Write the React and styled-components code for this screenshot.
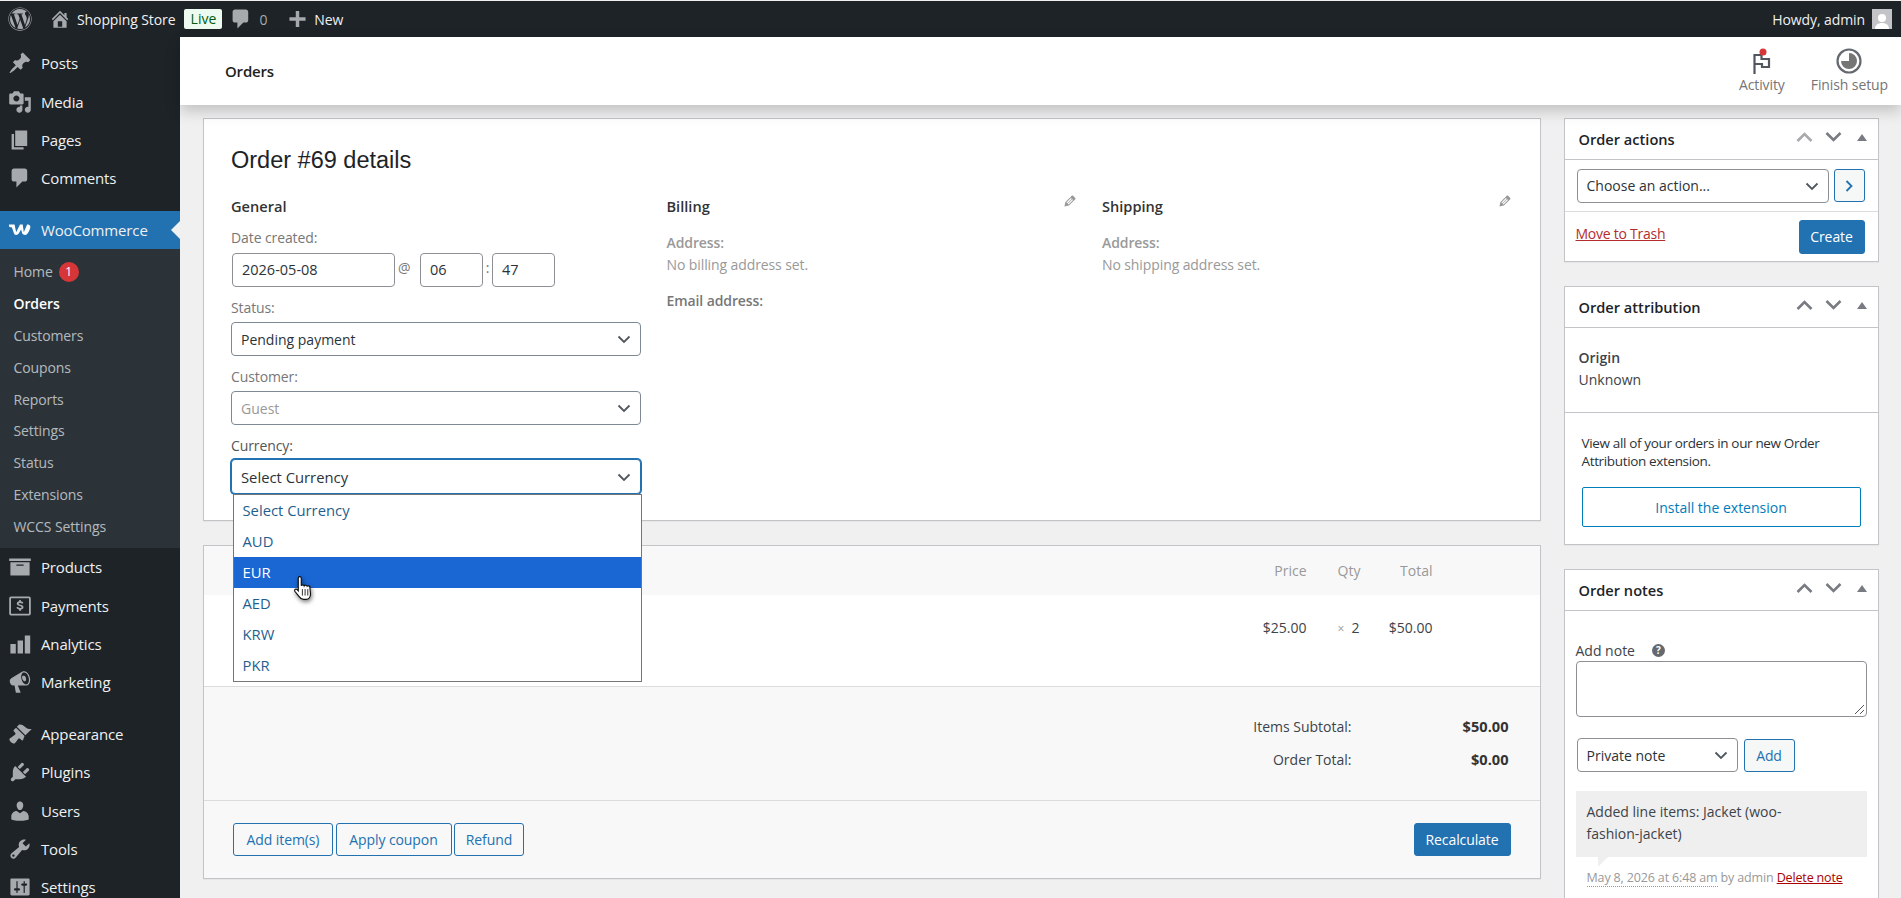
import React from "react";
import styled, { createGlobalStyle } from "styled-components";
import { FaWordpress } from "react-icons/fa";

const paths = {
  home: "M16 8.500l1.530 1.530-1.060 1.060L10 4.620l-6.470 6.470-1.060-1.060L10 2.500l4 4v-2h2v4zm-6-2.460l6 5.990V18H4v-5.970zM12 17v-5H8v5h4z",
  comment: "M5 2h9c1.100 0 2 .9 2 2v7c0 1.100-.9 2-2 2h-2l-5 5v-5H5c-1.100 0-2-.9-2-2V4c0-1.100.9-2 2-2z",
  plus: "M17 8v3h-5.500v5.500h-3V11H3V8h5.500V2.500h3V8z",
  post: "M10.440 3.020l1.820-1.820 6.360 6.350-1.830 1.820c-1.050-.68-2.480-.57-3.410.36l-.75.75c-.92.93-1.040 2.350-.35 3.410l-1.830 1.820-2.410-2.410-2.800 2.790c-.42.42-3.380 2.710-3.800 2.290s1.860-3.390 2.280-3.810l2.790-2.790L4.100 9.360l1.830-1.820c1.050.69 2.480.57 3.400-.36l.75-.75c.93-.92 1.050-2.350.36-3.410z",
  media: "M13 11V4c0-.55-.45-1-1-1h-1.670L9 1H5L3.670 3H2c-.55 0-1 .45-1 1v7c0 .55.45 1 1 1h10c.55 0 1-.45 1-1zM7 4.500c1.380 0 2.500 1.120 2.500 2.500S8.380 9.500 7 9.500 4.500 8.380 4.500 7 5.620 4.500 7 4.500zM14 6h5v10.500c0 1.380-1.120 2.500-2.500 2.500S14 17.880 14 16.500s1.120-2.500 2.500-2.500c.17 0 .34.02.5.05V9h-3V6zm-4 8.050V13h2v3.500c0 1.380-1.120 2.500-2.500 2.500S7 17.880 7 16.500 8.120 14 9.500 14c.17 0 .34.02.5.05z",
  page: "M6 15V2h10v13H6zm-1 1h8v2H3V5h2v11z",
  archive: "M19 3v2H1V3h18zM2 6h16v11H2V6zm11 3V8H7v1h6z",
  payments: "M2.500 2h15A1.500 1.500 0 0 1 19 3.500v13a1.500 1.500 0 0 1-1.500 1.500h-15A1.500 1.500 0 0 1 1 16.500v-13A1.500 1.500 0 0 1 2.500 2zm0 1.500v13h15v-13h-15zM9.300 5h1.400v1.100c1 .1 1.800.6 2.100 1.300l-1.200.7c-.2-.4-.7-.7-1.500-.7-.7 0-1.200.3-1.200.7s.4.600 1.500.8c1.500.3 2.500.8 2.500 2.100 0 1.100-.9 1.800-2 1.900V14H9.300v-1.100c-1.100-.1-2-.7-2.300-1.600l1.200-.6c.3.6.9 1 1.800 1 .8 0 1.300-.3 1.300-.8s-.4-.7-1.600-.9C8.200 9.700 7.300 9.200 7.300 8c0-1 .8-1.700 2-1.900V5z",
  analytics: "M2 10h4.500v8H2zM8 7h4.500v11H8zM14 3h4.500v15H14z",
  marketing: "M18.150 5.940c.46 1.620.38 3.220-.02 4.480-.42 1.280-1.260 2.180-2.300 2.480-.16.06-.26.06-.4.06-.06.02-.12.02-.18.02-.06.02-.14.02-.22.02h-6.800l2.220 5.500c.02.14-.06.26-.14.34-.08.1-.24.16-.34.16H6.950c-.1 0-.26-.06-.34-.16-.08-.08-.16-.2-.14-.34l-1-5.500H4.250l-.02-.02c-.5.06-1.080-.18-1.540-.62s-.88-1.080-1.060-1.880c-.24-.8-.2-1.560-.02-2.200.18-.62.58-1.080 1.060-1.300l.02-.02 9-5.400c.1-.06.18-.1.24-.16.06-.04.14-.08.24-.12.16-.08.28-.12.5-.18 1.040-.3 2.240.1 3.220 1 .98.88 1.800 2.240 2.260 3.860zm-2.580 5.980h-.02c.4-.1.74-.34 1.040-.7.58-.7.86-1.760.86-3.040-.02-.64-.1-1.300-.28-1.980-.34-1.360-1.020-2.500-1.780-3.240s-1.680-1.100-2.460-.88c-.82.22-1.400.96-1.700 2-.32 1.040-.28 2.360.06 3.720.38 1.360 1 2.500 1.800 3.240.78.74 1.620 1.100 2.480.88zm-2.540-7.080c.22-.04.42-.02.62.04.38.16.76.48 1.020 1s.42 1.200.42 1.780c0 .3-.04.56-.12.8-.18.48-.44.84-.86.94-.34.1-.8-.06-1.140-.4-.44-.4-.78-.96-1.020-1.580-.24-.64-.3-1.300-.16-1.760.12-.42.34-.72.7-.82z",
  appearance: "M14.480 11.060L7.410 3.990l1.500-1.500c.5-.56 2.300-.47 3.510.32 1.210.8 1.430 1.280 2.910 2.100 1.180.64 2.450 1.260 4.450.85zm-.71.71L6.700 4.700 4.930 6.470c-.39.39-.39 1.020 0 1.410l1.060 1.060c.39.39.39 1.030 0 1.420-.6.6-1.430 1.110-2.210 1.690-.35.26-.7.53-1.010.84C1.430 13.260 1 14.090 1.250 15c.25.91 1.600 2.310 2.750 2.750 1.150.44 1.740-.18 2.110-.55.31-.31.58-.66.84-1.010.58-.78 1.090-1.610 1.690-2.210.39-.39 1.020-.39 1.410 0l1.060 1.060c.39.39 1.020.39 1.410 0z",
  plugins: "M13.110 4.360L9.870 7.600 8 5.730l3.240-3.240c.35-.34 1.050-.2 1.560.32.52.51.66 1.210.31 1.550zm-8 1.770l.91-1.120 9.010 9.010-1.190.84c-.71.71-2.630 1.160-3.820 1.160H6.140L4.900 17.260c-.59.59-1.540.59-2.120 0-.59-.58-.59-1.530 0-2.120l1.240-1.240v-3.880c0-1.130.4-3.190 1.090-3.890zm7.260 3.970l3.240-3.240c.34-.35 1.040-.21 1.550.31.52.51.66 1.210.31 1.550l-3.240 3.250z",
  users: "M10 9.250c-2.270 0-2.730-3.440-2.730-3.440C7 4.020 7.820 2 9.970 2c2.160 0 2.980 2.020 2.710 3.810 0 0-.41 3.440-2.680 3.440zm0 2.570L12.720 10c2.390 0 4.520 2.330 4.520 4.530v2.490s-3.650 1.130-7.240 1.130c-3.650 0-7.240-1.130-7.240-1.130v-2.490c0-2.250 1.940-4.480 4.470-4.480z",
  tools: "M16.680 9.770c-1.340 1.340-3.300 1.670-4.950.99l-5.410 6.520c-.99.99-2.590.99-3.580 0s-.99-2.590 0-3.570l6.520-5.420c-.68-1.650-.35-3.610.99-4.950 1.280-1.280 3.120-1.620 4.720-1.060l-2.890 2.890 2.820 2.820 2.860-2.870c.53 1.580.18 3.390-1.080 4.650zM3.810 16.210c.4.39 1.040.39 1.430 0 .4-.4.4-1.040 0-1.430-.39-.4-1.030-.4-1.430 0-.39.39-.39 1.030 0 1.430z",
  settings: "M18 16V4c0-.55-.45-1-1-1H3c-.55 0-1 .45-1 1v12c0 .55.45 1 1 1h14c.55 0 1-.45 1-1zM8 11h1c.55 0 1 .45 1 1s-.45 1-1 1H8v1.500c0 .28-.22.5-.5.5s-.5-.22-.5-.5V13H6c-.55 0-1-.45-1-1s.45-1 1-1h1V5.500c0-.28.22-.5.5-.5s.5.22.5.5V11zm5-2h-1c-.55 0-1-.45-1-1s.45-1 1-1h1V5.500c0-.28.22-.5.5-.5s.5.22.5.5V7h1c.55 0 1 .45 1 1s-.45 1-1 1h-1v5.500c0 .28-.22.5-.5.5s-.5-.22-.5-.5V9z",
  pencil: "M13.890 3.390l2.710 2.720c.46.46.42 1.240.03 1.640l-8.010 8.020-5.560 1.160 1.160-5.580s7.600-7.630 7.990-8.030c.39-.39 1.220-.39 1.680.07zm-2.730 2.790l-5.590 5.610 1.110 1.110 5.540-5.650zm-2.970 8.230l5.580-5.600-1.070-1.080-5.590 5.600z",
};

const FONT = `"Open Sans", "Noto Sans", sans-serif`;

const GlobalStyle = createGlobalStyle`
  html, body {
    margin: 0;
    padding: 0;
    height: 100%;
    overflow: hidden;
    background: #f0f0f1;
  }
  * {
    box-sizing: border-box;
  }
  #root {
    font-family: ${FONT};
    font-size: 14px;
    color: #3c434a;
  }
`;

const Page = styled.div`
  height: 898px;
  overflow: hidden;
  padding-top: 1px;
  display: flex;
  flex-direction: column;
`;

const AdminBar = styled.div`
  flex: 0 0 36px;
  background: #1d2327;
  color: #f0f0f1;
  display: flex;
  align-items: center;
  padding: 0 9px 0 8px;
`;

const BarIcon = styled.svg`
  fill: #a7aaad;
  width: ${(p) => p.$size || 20}px;
  height: ${(p) => p.$size || 20}px;
  flex: none;
  margin-left: ${(p) => p.$left || 0}px;
`;

const WpLogo = styled(FaWordpress)`
  color: #a7aaad;
  font-size: 24px;
  flex: none;
`;

const BarText = styled.span`
  margin-left: ${(p) => p.$left || 0}px;
  color: ${(p) => p.$color || "#f0f0f1"};
  white-space: nowrap;
  letter-spacing: -0.1px;
`;

const LiveBadge = styled.span`
  margin-left: 9px;
  width: 38px;
  height: 20px;
  flex: none;
  border-radius: 2px;
  background: #edfaef;
  color: #005c12;
  font-size: 14px;
  font-weight: 500;
  text-align: center;
  line-height: 20px;
`;

const BarSpacer = styled.div`
  flex: 1;
`;

const Avatar = styled.div`
  margin-left: 7px;
  width: 20px;
  height: 20px;
  background: #c3c4c7;
  display: flex;
  align-items: flex-end;
  justify-content: center;
  overflow: hidden;
`;

const Body = styled.div`
  flex: 1;
  display: flex;
  min-height: 0;
`;

const Sidebar = styled.nav`
  flex: 0 0 180px;
  background: #1d2327;
  padding-top: 7px;
`;

const MenuGroup = styled.div`
  margin-bottom: 13px;
`;

const MenuItem = styled.div`
  position: relative;
  height: 38.4px;
  display: flex;
  align-items: center;
  padding-left: 8px;
  gap: 9px;
  color: #f0f0f1;
  font-size: 15px;
  letter-spacing: -0.15px;
  background: ${(p) => (p.$active ? "#2271b1" : "transparent")};

  &::after {
    content: "";
    display: ${(p) => (p.$active ? "block" : "none")};
    position: absolute;
    right: 0;
    top: 50%;
    margin-top: -9px;
    border: 9px solid transparent;
    border-right-color: #f0f0f1;
    border-left-width: 0;
  }

  svg {
    flex: none;
    width: 24px;
    height: 24px;
    fill: #a7aaad;
  }
`;

const SubMenu = styled.div`
  background: #2c3338;
  padding: 7px 0 6px;
`;

const SubItem = styled.div`
  height: 31.8px;
  padding-left: 13.5px;
  display: flex;
  align-items: center;
  gap: 6px;
  color: ${(p) => (p.$current ? "#fff" : "rgba(240,246,252,.7)")};
  font-weight: ${(p) => (p.$current ? 600 : 400)};
  font-size: 14px;
  letter-spacing: -0.1px;
`;

const CountBubble = styled.span`
  width: 20px;
  height: 20px;
  border-radius: 50%;
  background: #d63638;
  color: #fff;
  font-size: 12px;
  line-height: 20px;
  text-align: center;
`;

const Main = styled.main`
  flex: 1;
  min-width: 0;
  display: flex;
  flex-direction: column;
`;

const Header = styled.header`
  position: relative;
  z-index: 2;
  flex: 0 0 68px;
  background: #fff;
  box-shadow: 0 6px 14px rgba(0, 0, 0, 0.2);
  display: flex;
  align-items: center;
  justify-content: space-between;
  padding: 0 13px 0 45px;
`;

const HeaderTitle = styled.div`
  font-size: 15px;
  font-weight: 600;
  color: #1e1e1e;
  letter-spacing: -0.2px;
`;

const HeaderActions = styled.div`
  display: flex;
  gap: 26px;
`;

const HeaderAction = styled.div`
  display: flex;
  flex-direction: column;
  align-items: center;
  gap: 1px;
  color: #757575;
  font-size: 14px;
  letter-spacing: -0.1px;
  height: 52px;
  padding-top: 3px;
`;

const Content = styled.div`
  flex: 1;
  min-height: 0;
  display: grid;
  grid-template-columns: 1337.5px 315px;
  gap: 24px 23px;
  padding: 13px 0 0 23px;
`;

const Column = styled.div`
  display: flex;
  flex-direction: column;
  gap: 24px;
  min-width: 0;
`;

const Panel = styled.section`
  background: ${(p) => p.$bg || "#fff"};
  border: 1px solid #c3c4c7;
  box-shadow: 0 1px 1px rgba(0, 0, 0, 0.04);
  height: ${(p) => p.$height}px;
  flex: none;
`;

const OrderPanel = styled(Panel)`
  padding: 26px 26px 0 27px;
`;

const OrderTitle = styled.h2`
  margin: 0 0 17px;
  font-family: "Liberation Sans", Arial, sans-serif;
  font-weight: 400;
  font-size: 23.5px;
  line-height: 30px;
  color: #1d2327;
`;

const ColumnsGrid = styled.div`
  display: grid;
  grid-template-columns: repeat(3, 410px);
  gap: 25.5px;
`;

const OrderCol = styled.div`
  position: relative;
`;

const ColHeading = styled.h3`
  margin: 0 0 7px;
  font-size: 14.6px;
  line-height: 28px;
  font-weight: 600;
  color: #333;
`;

const PencilIcon = styled.svg`
  position: absolute;
  top: 1px;
  right: -1px;
  width: 16px;
  height: 16px;
  fill: #999;
`;

const FieldLabel = styled.div`
  height: 22px;
  line-height: 22px;
  color: ${(p) => p.$color || "#777"};
  font-weight: ${(p) => (p.$strong ? 600 : 400)};
  font-size: 14px;
  letter-spacing: -0.1px;
  margin-top: ${(p) => p.$top || 0}px;
  margin-bottom: ${(p) => p.$bottom || 0}px;
`;

const DateRow = styled.div`
  display: flex;
  align-items: center;
  padding-left: 1px;
  color: #777;
  height: 34px;
`;

const TextBox = styled.div`
  width: ${(p) => p.$width}px;
  height: 34px;
  flex: none;
  border: 1px solid #8c8f94;
  border-radius: 4px;
  background: #fff;
  padding-left: 9px;
  line-height: 32px;
  color: #2c3338;
  font-size: 14.5px;
`;

const DateSep = styled.span`
  width: ${(p) => p.$width}px;
  text-align: ${(p) => p.$align || "center"};
  flex: none;
  margin-top: -5px;
  padding-left: ${(p) => p.$pad || 0}px;
`;

const SelectBox = styled.div`
  display: flex;
  align-items: center;
  justify-content: space-between;
  height: ${(p) => p.$height || 34}px;
  width: ${(p) => (p.$width ? `${p.$width}px` : "100%")};
  flex: none;
  background: #fff;
  border: 1px solid ${(p) => (p.$focus ? "#2271b1" : p.$dark ? "#8c8f94" : "#7e8993")};
  box-shadow: ${(p) => (p.$focus ? "0 0 0 1px #2271b1" : "none")};
  border-radius: 4px;
  padding: 0 8px 0 9px;
  color: ${(p) => (p.$muted ? "#999" : "#2c3338")};
  font-size: ${(p) => p.$font || 14}px;
  white-space: nowrap;
`;

const Chevron = styled.svg`
  width: 16px;
  height: 16px;
  flex: none;
  fill: none;
  stroke: #50575e;
  stroke-width: 1.8;
`;

const CurrencyField = styled.div`
  position: relative;
`;

const Dropdown = styled.div`
  position: absolute;
  z-index: 3;
  top: 34.5px;
  left: 2px;
  width: 409px;
  height: 188px;
  border: 1px solid #767676;
  background: #fff;
`;

const Option = styled.div`
  height: 31px;
  line-height: 31px;
  padding-left: 8.5px;
  color: ${(p) => (p.$selected ? "#fff" : "#1f5f8e")};
  background: ${(p) => (p.$selected ? "#1a66d3" : "transparent")};
  font-size: 14.8px;
`;

const HandCursor = styled.svg`
  position: absolute;
  left: 59px;
  top: 80px;
  width: 22px;
  height: 26px;
  filter: drop-shadow(1px 2px 2px rgba(0, 0, 0, 0.5));
`;

const ItemGrid = styled.div`
  display: grid;
  grid-template-columns: 70px 31px 40px 55px;
  justify-content: end;
  padding-right: 107px;
  align-items: center;
  height: ${(p) => p.$height}px;
  background: ${(p) => p.$bg};
  color: ${(p) => p.$color};
  font-size: 14px;
  border-bottom: ${(p) => (p.$line ? "1px solid #dcdcde" : "none")};
  padding-bottom: ${(p) => p.$pb || 0}px;
`;

const PriceCell = styled.div`
  text-align: right;
  grid-column: ${(p) => p.$col};
`;

const QtyCell = styled.div`
  grid-column: 3;
  white-space: nowrap;
`;

const Times = styled.span`
  color: #999;
  margin: 0 7px 0 0;
  font-size: 12px;
`;

const TotalsArea = styled.div`
  height: 114px;
  border-bottom: 1px solid #dcdcde;
  padding: 23px 31px 0 0;
`;

const TotalsRow = styled.div`
  display: flex;
  justify-content: flex-end;
  height: 33px;
  line-height: 33px;
`;

const TotalsLabel = styled.div`
  text-align: right;
`;

const TotalsValue = styled.div`
  width: 157px;
  text-align: right;
  font-weight: 700;
  font-size: 14.6px;
  color: #333;
`;

const ActionBar = styled.div`
  display: flex;
  align-items: center;
  justify-content: space-between;
  padding: 0 29px;
  height: 77px;
`;

const ButtonRow = styled.div`
  display: flex;
  gap: 2.5px;
`;

const Button = styled.div`
  display: inline-flex;
  align-items: center;
  justify-content: center;
  flex: none;
  width: ${(p) => p.$width}px;
  height: ${(p) => p.$height || 33}px;
  border-radius: 3px;
  border: 1px solid #2271b1;
  background: ${(p) => (p.$primary ? "#2271b1" : p.$tint ? "#f6f7f7" : "transparent")};
  color: ${(p) => (p.$primary ? "#fff" : "#2271b1")};
  font-size: 14px;
  letter-spacing: -0.1px;
  white-space: nowrap;
`;

const BoxHead = styled.div`
  height: 41px;
  border-bottom: 1px solid #c3c4c7;
  display: flex;
  align-items: center;
  padding: 0 11px 0 14px;
`;

const BoxTitle = styled.h2`
  flex: 1;
  margin: 0;
  font-size: 14.6px;
  font-weight: 600;
  color: #1d2327;
`;

const BoxControls = styled.div`
  display: flex;
  align-items: center;
  gap: 12px;
  margin-top: -4px;
`;

const HandleIcon = styled.svg`
  width: 17px;
  height: 12px;
  fill: none;
  stroke: ${(p) => (p.$faded ? "#a7aaad" : "#787c82")};
  stroke-width: 2.600;
`;

const Triangle = styled.div`
  margin-left: 3px;
  width: 0;
  height: 0;
  border: 5px solid transparent;
  border-top: 0;
  border-bottom: 7px solid #787c82;
`;

const BoxRow = styled.div`
  display: flex;
  align-items: center;
  justify-content: ${(p) => p.$justify || "flex-start"};
  gap: ${(p) => p.$gap || 0}px;
  padding: ${(p) => p.$padding};
  height: ${(p) => p.$height}px;
  border-bottom: ${(p) => (p.$line ? `1px solid ${p.$line}` : "none")};
`;

const TrashLink = styled.a`
  color: #b32d2e;
  text-decoration: underline;
  font-size: 14px;
  letter-spacing: -0.25px;
  margin-top: -6px;
`;

const OriginBlock = styled.div`
  height: 85px;
  padding: 19px 14px 0;
  border-bottom: 1px solid #c3c4c7;
  line-height: 22px;
`;

const OriginTitle = styled.div`
  font-weight: 600;
`;

const PromoBlock = styled.div`
  padding: 21px 17px 0;
`;

const PromoText = styled.p`
  margin: 0 0 17px;
  font-size: 13.5px;
  line-height: 18px;
  color: #2c3338;
  letter-spacing: -0.35px;
`;

const InstallButton = styled.div`
  height: 40px;
  border: 1px solid #007cba;
  border-radius: 2px;
  color: #007cba;
  display: flex;
  align-items: center;
  justify-content: center;
`;

const NotesBody = styled.div`
  padding: 29px 11px 0;
`;

const NoteLabel = styled.div`
  display: flex;
  align-items: center;
  gap: 17px;
  height: 21px;
`;

const HelpDot = styled.span`
  width: 13px;
  height: 13px;
  border-radius: 50%;
  background: #646970;
  color: #fff;
  font-size: 10px;
  font-weight: 700;
  line-height: 13px;
  text-align: center;
`;

const NoteArea = styled.div`
  position: relative;
  height: 56px;
  border: 1px solid #8c8f94;
  border-radius: 4px;
  background: #fff;
`;

const ResizeGrip = styled.svg`
  position: absolute;
  right: 1px;
  bottom: 1px;
  width: 11px;
  height: 11px;
  fill: none;
  stroke: #555;
  stroke-width: 1;
`;

const NoteForm = styled.div`
  display: flex;
  align-items: center;
  gap: 6px;
  margin: 21px 0 19px 1px;
`;

const NoteBubble = styled.div`
  position: relative;
  height: 66px;
  background: #efefef;
  padding: 10px 50px 0 11px;
  line-height: 22px;
  color: #3c434a;

  &::after {
    content: "";
    position: absolute;
    left: 22px;
    top: 100%;
    border-style: solid;
    border-width: 10px 10px 0 0;
    border-color: #efefef transparent transparent transparent;
  }
`;

const NoteMeta = styled.div`
  margin-top: 12px;
  padding-left: 11px;
  font-size: 12.5px;
  color: #999;
  letter-spacing: -0.15px;
  white-space: nowrap;
`;

const MetaDate = styled.span`
  border-bottom: 1px dotted #999;
`;

const DeleteLink = styled.a`
  color: #a00;
  text-decoration: underline;
`;

const Dash = ({ name, ...rest }) => (
  <svg viewBox="0 0 20 20" {...rest}>
    <path d={paths[name]} />
  </svg>
);

const SelectArrow = () => (
  <Chevron viewBox="0 0 16 16">
    <path d="M2.500 5.500L8 11l5.500-5.500" />
  </Chevron>
);

const menuTop = [
  ["post", "Posts"],
  ["media", "Media"],
  ["page", "Pages"],
  ["comment", "Comments"],
];
const subMenu = ["Home", "Orders", "Customers", "Coupons", "Reports", "Settings", "Status", "Extensions", "WCCS Settings"];
const menuShop = [
  ["archive", "Products"],
  ["payments", "Payments"],
  ["analytics", "Analytics"],
  ["marketing", "Marketing"],
];
const menuAdmin = [
  ["appearance", "Appearance"],
  ["plugins", "Plugins"],
  ["users", "Users"],
  ["tools", "Tools"],
  ["settings", "Settings"],
];
const currencies = ["Select Currency", "AUD", "EUR", "AED", "KRW", "PKR"];

function MenuList({ items }) {
  return items.map(([icon, label]) => (
    <MenuItem key={label}>
      <Dash name={icon} />
      {label}
    </MenuItem>
  ));
}

function BoxHeader({ title, fadedUp }) {
  return (
    <BoxHead>
      <BoxTitle>{title}</BoxTitle>
      <BoxControls>
        <HandleIcon viewBox="0 0 17 12" $faded={fadedUp}>
          <path d="M1.500 10L8.500 3l7 7" />
        </HandleIcon>
        <HandleIcon viewBox="0 0 17 12">
          <path d="M1.500 2l7 7 7-7" />
        </HandleIcon>
        <Triangle />
      </BoxControls>
    </BoxHead>
  );
}

export default function App() {
  return (
    <>
      <GlobalStyle />
      <Page>
        <AdminBar>
          <WpLogo />
          <BarIcon as={Dash} name="home" $left={17} $size={22} />
          <BarText $left={6}>Shopping Store</BarText>
          <LiveBadge>Live</LiveBadge>
          <BarIcon as={Dash} name="comment" $left={7} $size={24} />
          <BarText $left={6} $color="#a7aaad">0</BarText>
          <BarIcon as={Dash} name="plus" $left={19} $size={23} />
          <BarText $left={5}>New</BarText>
          <BarSpacer />
          <BarText>Howdy, admin</BarText>
          <Avatar>
            <svg width="16" height="17" viewBox="0 0 16 17" fill="#fff">
              <circle cx="8" cy="6" r="4" />
              <path d="M1 17c0-4 3-6 7-6s7 2 7 6z" />
            </svg>
          </Avatar>
        </AdminBar>
        <Body>
          <Sidebar>
            <MenuGroup>
              <MenuList items={menuTop} />
            </MenuGroup>
            <MenuItem $active>
              <svg viewBox="1 1 22 22">
                <path d="M2 7h5l1.500 7 3.500-7h2.500l1 7 3-7c1.500 0 3 .5 3 2 0 2-2.500 7.500-4.500 7.500-1.500 0-2.500-.5-3-1.500l-1-3.500-2 3.500c-.7 1-1.500 1.500-2.500 1.500-1.500 0-2-1-2.500-3L4.500 9.500H3C2 9.500 1.500 7.500 2 7z" fill="#fff" />
              </svg>
              WooCommerce
            </MenuItem>
            <SubMenu>
              {subMenu.map((label) => (
                <SubItem key={label} $current={label === "Orders"}>
                  {label}
                  {label === "Home" && <CountBubble>1</CountBubble>}
                </SubItem>
              ))}
            </SubMenu>
            <MenuGroup>
              <MenuList items={menuShop} />
            </MenuGroup>
            <MenuList items={menuAdmin} />
          </Sidebar>
          <Main>
            <Header>
              <HeaderTitle>Orders</HeaderTitle>
              <HeaderActions>
                <HeaderAction>
                  <svg width="26" height="26" viewBox="0 0 26 26">
                    <path d="M5.500 6v20M5.500 7h7v4h7.500v8h-7v-3H5.500" fill="none" stroke="#50575e" strokeWidth="2.200" />
                    <circle cx="14" cy="4" r="3.500" fill="#d63638" />
                  </svg>
                  Activity
                </HeaderAction>
                <HeaderAction>
                  <svg width="26" height="26" viewBox="0 0 26 26">
                    <circle cx="13" cy="13" r="11.500" fill="none" stroke="#646970" strokeWidth="2.200" />
                    <path d="M13 13V5a8 8 0 0 1 8 8zM13 13h8a8 8 0 0 1-16 0z" fill="#757575" />
                  </svg>
                  Finish setup
                </HeaderAction>
              </HeaderActions>
            </Header>
            <Content>
              <Column>
                <OrderPanel $height={403}>
                  <OrderTitle>Order #69 details</OrderTitle>
                  <ColumnsGrid>
                    <OrderCol>
                      <ColHeading>General</ColHeading>
                      <FieldLabel $bottom={4}>Date created:</FieldLabel>
                      <DateRow>
                        <TextBox $width={163}>2026-05-08</TextBox>
                        <DateSep $width={25} $align="left" $pad={3}>@</DateSep>
                        <TextBox $width={63}>06</TextBox>
                        <DateSep $width={9}>:</DateSep>
                        <TextBox $width={63}>47</TextBox>
                      </DateRow>
                      <FieldLabel $top={10} $bottom={3}>Status:</FieldLabel>
                      <SelectBox>
                        Pending payment
                        <SelectArrow />
                      </SelectBox>
                      <FieldLabel $top={10} $bottom={3}>Customer:</FieldLabel>
                      <SelectBox $muted>
                        Guest
                        <SelectArrow />
                      </SelectBox>
                      <FieldLabel $top={10} $bottom={2} $color="#555">Currency:</FieldLabel>
                      <CurrencyField>
                        <SelectBox $focus $height={35} $font={14.8}>
                          Select Currency
                          <SelectArrow />
                        </SelectBox>
                        <Dropdown>
                          {currencies.map((code) => (
                            <Option key={code} $selected={code === "EUR"}>{code}</Option>
                          ))}
                          <HandCursor viewBox="0 0 20 24">
                            <path d="M6 1.500c1 0 1.500.7 1.500 1.500v7c.3-1 2.500-1 2.700 0 .4-.8 2.400-.8 2.700.3.500-.6 2.400-.4 2.500.8l.6 6.400c0 2.500-1.500 5-4 5H9.500c-2 0-3-1-4-2.500L1.500 15c-.7-1.500 1-2.700 2.200-1.500l1 1V3c0-.8.5-1.500 1.300-1.500z" fill="#fff" stroke="#111" strokeWidth="1.100" />
                            <path d="M8.500 13v6M11 13v6M13.500 13v6" stroke="#111" strokeWidth=".8" />
                          </HandCursor>
                        </Dropdown>
                      </CurrencyField>
                    </OrderCol>
                    <OrderCol>
                      <ColHeading>Billing</ColHeading>
                      <PencilIcon as={Dash} name="pencil" />
                      <FieldLabel $color="#999" $strong $top={12}>Address:</FieldLabel>
                      <FieldLabel $color="#999">No billing address set.</FieldLabel>
                      <FieldLabel $top={14} $strong>Email address:</FieldLabel>
                    </OrderCol>
                    <OrderCol>
                      <ColHeading>Shipping</ColHeading>
                      <PencilIcon as={Dash} name="pencil" />
                      <FieldLabel $color="#999" $strong $top={12}>Address:</FieldLabel>
                      <FieldLabel $color="#999">No shipping address set.</FieldLabel>
                    </OrderCol>
                  </ColumnsGrid>
                </OrderPanel>
                <Panel $height={334} $bg="#f8f8f8">
                  <ItemGrid $height={49} $bg="#f8f8f8" $color="#999">
                    <PriceCell $col={1}>Price</PriceCell>
                    <QtyCell>Qty</QtyCell>
                    <PriceCell $col={4}>Total</PriceCell>
                  </ItemGrid>
                  <ItemGrid $height={92} $bg="#fff" $color="#3c434a" $line $pb={27}>
                    <PriceCell $col={1}>$25.00</PriceCell>
                    <QtyCell><Times>×</Times>2</QtyCell>
                    <PriceCell $col={4}>$50.00</PriceCell>
                  </ItemGrid>
                  <TotalsArea>
                    <TotalsRow>
                      <TotalsLabel>Items Subtotal:</TotalsLabel>
                      <TotalsValue>$50.00</TotalsValue>
                    </TotalsRow>
                    <TotalsRow>
                      <TotalsLabel>Order Total:</TotalsLabel>
                      <TotalsValue>$0.00</TotalsValue>
                    </TotalsRow>
                  </TotalsArea>
                  <ActionBar>
                    <ButtonRow>
                      <Button $width={100}>Add item(s)</Button>
                      <Button $width={116}>Apply coupon</Button>
                      <Button $width={70}>Refund</Button>
                    </ButtonRow>
                    <Button $primary $width={97}>Recalculate</Button>
                  </ActionBar>
                </Panel>
              </Column>
              <Column>
                <Panel $height={144}>
                  <BoxHeader title="Order actions" fadedUp />
                  <BoxRow $height={52} $padding="0 12px" $gap={5} $line="#dcdcde">
                    <SelectBox $width={252} $dark>
                      Choose an action...
                      <SelectArrow />
                    </SelectBox>
                    <Button $width={31} $tint>
                      <svg width="10" height="14" viewBox="0 0 10 14" fill="none" stroke="#2271b1" strokeWidth="1.800">
                        <path d="M2.500 2l5 5-5 5" />
                      </svg>
                    </Button>
                  </BoxRow>
                  <BoxRow $height={49} $padding="0 13px 0 11px" $justify="space-between">
                    <TrashLink>Move to Trash</TrashLink>
                    <Button $primary $width={66} $height={34}>Create</Button>
                  </BoxRow>
                </Panel>
                <Panel $height={259}>
                  <BoxHeader title="Order attribution" />
                  <OriginBlock>
                    <OriginTitle>Origin</OriginTitle>
                    Unknown
                  </OriginBlock>
                  <PromoBlock>
                    <PromoText>View all of your orders in our new Order Attribution extension.</PromoText>
                    <InstallButton>Install the extension</InstallButton>
                  </PromoBlock>
                </Panel>
                <Panel $height={400}>
                  <BoxHeader title="Order notes" />
                  <NotesBody>
                    <NoteLabel>
                      Add note
                      <HelpDot>?</HelpDot>
                    </NoteLabel>
                    <NoteArea>
                      <ResizeGrip viewBox="0 0 11 11">
                        <path d="M1 10l9-9M6 10l4-4" />
                      </ResizeGrip>
                    </NoteArea>
                    <NoteForm>
                      <SelectBox $width={161} $dark>
                        Private note
                        <SelectArrow />
                      </SelectBox>
                      <Button $width={51} $tint>Add</Button>
                    </NoteForm>
                    <NoteBubble>Added line items: Jacket (woo-fashion-jacket)</NoteBubble>
                    <NoteMeta>
                      <MetaDate>May 8, 2026 at 6:48 am</MetaDate> by admin <DeleteLink>Delete note</DeleteLink>
                    </NoteMeta>
                  </NotesBody>
                </Panel>
              </Column>
            </Content>
          </Main>
        </Body>
      </Page>
    </>
  );
}
